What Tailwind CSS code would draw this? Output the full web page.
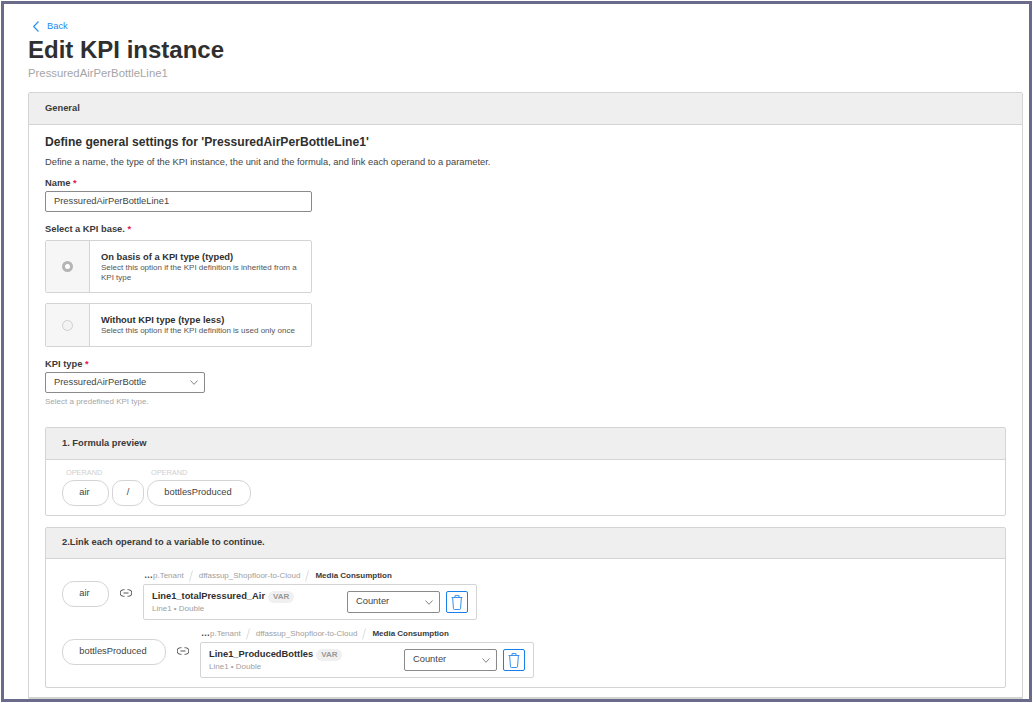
<!DOCTYPE html>
<html lang="en">
<head>
    <meta charset="UTF-8">
    <meta name="viewport" content="width=device-width, initial-scale=1.0">
    <title>Edit KPI instance</title>
    <script src="https://cdn.jsdelivr.net/npm/@tailwindcss/browser@4"></script>
</head>
<body class="bg-white h-[703px] overflow-hidden font-['Liberation_Sans',Arial,sans-serif] text-[#2f2f2f]">
<div class="ml-[1px] mt-[1px] h-[701px] w-[1031px] border-[3px] border-[#6a6a8a] overflow-hidden pl-[24px] pr-[6px] pt-[16px] bg-white">

    <a class="flex items-center gap-[8px] pl-[5px] h-[13px] text-[9.33px] text-[#1a8cf0]">
        <svg class="w-[6px] h-[11px]" viewBox="0 0 6 11" fill="none" stroke="#2a96f5" stroke-width="1.2"><path d="M5.5 .5 .7 5.5l4.8 5"/></svg>
        Back
    </a>
    <h1 class="text-[24px] leading-[28px] font-bold mt-[3px]">Edit KPI instance</h1>
    <p class="text-[11.33px] leading-[14px] mt-[2px] text-[#a6a6a6]">PressuredAirPerBottleLine1</p>

    <div class="mt-[12px] border border-[#d4d4d4] rounded-t-[2px]">
        <div class="h-[32px] bg-[#efefef] border-b border-[#d4d4d4] flex items-center pl-[16px] text-[9.33px] font-bold text-[#3a3a3a]">General</div>
        <div class="px-[16px]">
            <h2 class="text-[12.13px] leading-[14px] font-bold mt-[10px]">Define general settings for 'PressuredAirPerBottleLine1'</h2>
            <p class="text-[9.33px] leading-[11px] mt-[8px] text-[#444]">Define a name, the type of the KPI instance, the unit and the formula, and link each operand to a parameter.</p>

            <label class="block text-[9.33px] leading-[11px] font-bold mt-[10px] text-[#3a3a3a]">Name <span class="text-[#e8174f]">*</span></label>
            <div class="w-[267px] h-[21px] mt-[2px] border border-[#8a8a8a] rounded-[2px] flex items-center pl-[8px] text-[9.33px] text-[#444]">PressuredAirPerBottleLine1</div>

            <label class="block text-[9.33px] leading-[11px] font-bold mt-[12px] text-[#3a3a3a]">Select a KPI base. <span class="text-[#e8174f]">*</span></label>
            <div class="w-[267px] h-[53px] mt-[5px] border border-[#d4d4d4] rounded-[2px] flex">
                <div class="w-[44px] shrink-0 bg-[#f6f6f6] border-r border-[#d4d4d4] flex items-center justify-center">
                    <span class="w-[11px] h-[11px] rounded-full border-[3px] border-[#b5b5b5] bg-white"></span>
                </div>
                <div class="pl-[11px] pr-[12px] pt-[11px]">
                    <div class="text-[9.33px] leading-[11px] font-bold">On basis of a KPI type (typed)</div>
                    <div class="text-[8px] leading-[10px] text-[#555]">Select this option if the KPI definition is inherited from a KPI type</div>
                </div>
            </div>
            <div class="w-[267px] h-[44px] mt-[10px] border border-[#d4d4d4] rounded-[2px] flex">
                <div class="w-[44px] shrink-0 bg-[#f6f6f6] border-r border-[#d4d4d4] flex items-center justify-center">
                    <span class="w-[11px] h-[11px] rounded-full border border-[#cfcfcf] bg-[#f3f3f3]"></span>
                </div>
                <div class="pl-[11px] pt-[11px]">
                    <div class="text-[9.33px] leading-[11px] font-bold">Without KPI type (type less)</div>
                    <div class="text-[8px] leading-[10px] text-[#555]">Select this option if the KPI definition is used only once</div>
                </div>
            </div>

            <label class="block text-[9.33px] leading-[11px] font-bold mt-[12px] text-[#3a3a3a]">KPI type <span class="text-[#e8174f]">*</span></label>
            <div class="w-[160px] h-[21px] mt-[2px] border border-[#8a8a8a] rounded-[2px] flex items-center justify-between pl-[8px] pr-[6px] text-[9.33px] text-[#444]">
                PressuredAirPerBottle
                <svg class="w-[8px] h-[5px]" viewBox="0 0 8 5" fill="none" stroke="#666" stroke-width=".8"><path d="M.5.5 4 4.3 7.5.5"/></svg>
            </div>
            <p class="text-[8px] leading-[10px] mt-[4px] text-[#a6a6a6]">Select a predefined KPI type.</p>

            <section class="mt-[20px] border border-[#d4d4d4] rounded-[2px]">
                <div class="h-[32px] bg-[#efefef] border-b border-[#d4d4d4] flex items-center pl-[16px] text-[9.33px] font-bold text-[#3a3a3a]">1. Formula preview</div>
                <div class="h-[55px] px-[16px] flex gap-[3px] pt-[9px]">
                    <div class="w-[47px]">
                        <div class="text-[7.33px] leading-[8px] pl-[4px] text-[#cfcfcf]">OPERAND</div>
                        <div class="mt-[3px] h-[26px] pr-[2px] border border-[#d4d4d4] rounded-[12px] flex items-center justify-center text-[9.33px] text-[#444]">air</div>
                    </div>
                    <div class="w-[32px] pt-[11px]">
                        <div class="h-[26px] border border-[#d4d4d4] rounded-[10px] flex items-center justify-center text-[9.33px] text-[#444]">/</div>
                    </div>
                    <div class="w-[104px]">
                        <div class="text-[7.33px] leading-[8px] pl-[4px] text-[#cfcfcf]">OPERAND</div>
                        <div class="mt-[3px] h-[26px] pr-[2px] border border-[#d4d4d4] rounded-[12px] flex items-center justify-center text-[9.33px] text-[#444]">bottlesProduced</div>
                    </div>
                </div>
            </section>

            <section class="mt-[11px] border border-[#d4d4d4] rounded-[2px]">
                <div class="h-[31px] bg-[#efefef] border-b border-[#d4d4d4] flex items-center pl-[16px] text-[9.33px] font-bold text-[#3a3a3a]">2.Link each operand to a variable to continue.</div>
                <div class="h-[128px] pl-[16px] pt-[11px]">

                    <div class="flex">
                        <div class="w-[47px] h-[26px] mt-[11px] pr-[2px] border border-[#d4d4d4] rounded-[12px] flex items-center justify-center text-[9.33px] text-[#444]">air</div>
                        <svg class="w-[12px] h-[8px] ml-[11px] mt-[19px]" viewBox="0 0 12 8" fill="none" stroke="#555" stroke-width="1"><path d="M4.5.7H3.4a3.3 3.3 0 0 0 0 6.6h1.1M7.5.7h1.1a3.3 3.3 0 0 1 0 6.6H7.5M3.5 4h5"/></svg>
                        <div class="ml-[11px]">
                            <div class="h-[12px] flex items-center text-[8px] text-[#a0a0a0] pl-[1px]">
                                <b class="text-[#444] text-[9px]">…</b>p.Tenant
                                <svg class="w-[4px] h-[12px] ml-[5px] mr-[6px]" viewBox="0 0 4 12" fill="none" stroke="#d4d4d4" stroke-width=".8"><path d="M3.5.5.5 11.5"/></svg>dffassup_Shopfloor-to-Cloud
                                <svg class="w-[4px] h-[12px] ml-[5px] mr-[6px]" viewBox="0 0 4 12" fill="none" stroke="#d4d4d4" stroke-width=".8"><path d="M3.5.5.5 11.5"/></svg><b class="text-[#3a3a3a]">Media Consumption</b>
                            </div>
                            <div class="w-[334px] h-[36px] mt-[2px] border border-[#d4d4d4] rounded-[2px] flex items-center pl-[8px] pr-[8px]">
                                <div class="flex-1">
                                    <div class="flex items-center gap-[3px] text-[9.33px] leading-[11px] font-bold">Line1_totalPressured_Air <span class="h-[12px] px-[5px] rounded-[6px] bg-[#f0f0f0] text-[8px] leading-[12px] text-[#999]">VAR</span></div>
                                    <div class="text-[8px] leading-[10px] text-[#a0a0a0] mt-[1px]">Line1 • Double</div>
                                </div>
                                <div class="w-[93px] h-[22px] border border-[#8a8a8a] rounded-[2px] flex items-center justify-between pl-[8px] pr-[6px] text-[9.33px] text-[#444]">
                                    Counter
                                    <svg class="w-[8px] h-[5px]" viewBox="0 0 8 5" fill="none" stroke="#666" stroke-width=".8"><path d="M.5.5 4 4.3 7.5.5"/></svg>
                                </div>
                                <button class="ml-[6px] w-[22px] h-[22px] border border-[#1a7fe8] rounded-[2px] flex items-center justify-center">
                                    <svg class="w-[12px] h-[15px]" viewBox="0 0 12 15" fill="none" stroke="#3b8fee" stroke-width="1"><path d="M.6 2.5h10.8M4 2.3V.6h4v1.7M1.6 2.5l.9 11.3a.9.9 0 0 0 .9.7h5.2a.9.9 0 0 0 .9-.7l.9-11.3"/></svg>
                                </button>
                            </div>
                        </div>
                    </div>

                    <div class="flex mt-[8px]">
                        <div class="w-[104px] h-[26px] mt-[11px] pr-[2px] border border-[#d4d4d4] rounded-[12px] flex items-center justify-center text-[9.33px] text-[#444]">bottlesProduced</div>
                        <svg class="w-[12px] h-[8px] ml-[11px] mt-[19px]" viewBox="0 0 12 8" fill="none" stroke="#555" stroke-width="1"><path d="M4.5.7H3.4a3.3 3.3 0 0 0 0 6.6h1.1M7.5.7h1.1a3.3 3.3 0 0 1 0 6.6H7.5M3.5 4h5"/></svg>
                        <div class="ml-[11px]">
                            <div class="h-[12px] flex items-center text-[8px] text-[#a0a0a0] pl-[1px]">
                                <b class="text-[#444] text-[9px]">…</b>p.Tenant
                                <svg class="w-[4px] h-[12px] ml-[5px] mr-[6px]" viewBox="0 0 4 12" fill="none" stroke="#d4d4d4" stroke-width=".8"><path d="M3.5.5.5 11.5"/></svg>dffassup_Shopfloor-to-Cloud
                                <svg class="w-[4px] h-[12px] ml-[5px] mr-[6px]" viewBox="0 0 4 12" fill="none" stroke="#d4d4d4" stroke-width=".8"><path d="M3.5.5.5 11.5"/></svg><b class="text-[#3a3a3a]">Media Consumption</b>
                            </div>
                            <div class="w-[334px] h-[36px] mt-[2px] border border-[#d4d4d4] rounded-[2px] flex items-center pl-[8px] pr-[8px]">
                                <div class="flex-1">
                                    <div class="flex items-center gap-[3px] text-[9.33px] leading-[11px] font-bold">Line1_ProducedBottles <span class="h-[12px] px-[5px] rounded-[6px] bg-[#f0f0f0] text-[8px] leading-[12px] text-[#999]">VAR</span></div>
                                    <div class="text-[8px] leading-[10px] text-[#a0a0a0] mt-[1px]">Line1 • Double</div>
                                </div>
                                <div class="w-[93px] h-[22px] border border-[#8a8a8a] rounded-[2px] flex items-center justify-between pl-[8px] pr-[6px] text-[9.33px] text-[#444]">
                                    Counter
                                    <svg class="w-[8px] h-[5px]" viewBox="0 0 8 5" fill="none" stroke="#666" stroke-width=".8"><path d="M.5.5 4 4.3 7.5.5"/></svg>
                                </div>
                                <button class="ml-[6px] w-[22px] h-[22px] border border-[#1a7fe8] rounded-[2px] flex items-center justify-center">
                                    <svg class="w-[12px] h-[15px]" viewBox="0 0 12 15" fill="none" stroke="#3b8fee" stroke-width="1"><path d="M.6 2.5h10.8M4 2.3V.6h4v1.7M1.6 2.5l.9 11.3a.9.9 0 0 0 .9.7h5.2a.9.9 0 0 0 .9-.7l.9-11.3"/></svg>
                                </button>
                            </div>
                        </div>
                    </div>

                </div>
            </section>
            <div class="mt-[9px] -mx-[16px] border-t border-[#d4d4d4]"></div>
        </div>
    </div>
</div>
</body>
</html>
